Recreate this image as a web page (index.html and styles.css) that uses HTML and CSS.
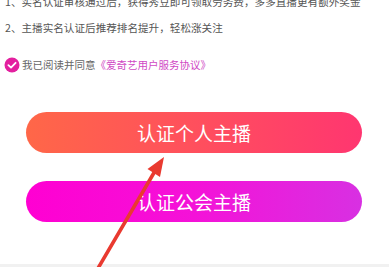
FILE: index.html
```html
<!DOCTYPE html>
<html lang="zh">
<head>
<meta charset="utf-8">
<link rel="stylesheet" href="styles.css">
</head>
<body>
<div class="page">
  <div class="notes">
    <p class="note">1、实名认证审核通过后，获得秀豆即可领取劳务费，多多直播更有额外奖金</p>
    <p class="note">2、主播实名认证后推荐排名提升，轻松涨关注</p>
  </div>
  <div class="agree">
    <svg class="check" viewBox="0 0 16 16" width="16" height="16">
      <circle cx="8" cy="8" r="7.5" fill="#e3209f"/>
      <path d="M4.4 8.2 L7 10.6 L11.6 5.8" fill="none" stroke="#fff" stroke-width="1.8" stroke-linecap="round" stroke-linejoin="round"/>
    </svg>
    <span class="agree-text">我已阅读并同意<span class="link">《爱奇艺用户服务协议》</span></span>
  </div>
  <div class="buttons">
    <div class="btn btn-personal">认证个人主播</div>
    <div class="btn btn-guild">认证公会主播</div>
  </div>
  <div class="bottom-bar"></div>
  <svg class="arrow" viewBox="0 0 389 267" width="389" height="267">
    <line x1="97" y1="270" x2="155" y2="171" stroke="#e93a30" stroke-width="3.6" stroke-linecap="round"/>
    <polygon points="164,157 147.5,169 160,177" fill="#e93a30"/>
  </svg>
</div>
</body>
</html>
```

FILE: styles.css
```css
html, body {
  margin: 0;
  padding: 0;
  background: #ffffff;
}
body {
  font-family: "Noto Sans CJK SC", "Noto Sans", sans-serif;
  overflow: hidden;
}
.page {
  position: relative;
  width: 389px;
  height: 267px;
  overflow: hidden;
}
.notes {
  margin-top: -11.5px;
  padding-left: 5px;
}
.note {
  margin: 0;
  font-size: 10.6px;
  line-height: 26px;
  color: #555555;
  white-space: nowrap;
}
.agree {
  display: flex;
  align-items: center;
  gap: 2px;
  margin-top: 16px;
  padding-left: 4px;
  height: 16px;
}
.check {
  flex: none;
}
.agree-text {
  font-size: 10.5px;
  color: #666666;
  line-height: 16px;
}
.link {
  color: #d048c4;
}
.buttons {
  display: flex;
  flex-direction: column;
  gap: 28px;
  margin: 39.5px 27px 0 26px;
}
.btn {
  height: 41px;
  border-radius: 21px;
  display: flex;
  align-items: center;
  justify-content: center;
  color: #ffffff;
  font-size: 19px;
  letter-spacing: 0;
}
.btn-personal {
  background: linear-gradient(90deg, #ff6748 0%, #ff4d5f 55%, #ff3670 100%);
}
.btn-guild {
  background: linear-gradient(90deg, #ff00d2 0%, #f412d8 50%, #d830e2 100%);
}
.bottom-bar {
  margin-top: 42px;
  height: 10px;
  background: #f1f1f1;
}
.arrow {
  position: absolute;
  left: 0;
  top: 0;
  pointer-events: none;
}
```
